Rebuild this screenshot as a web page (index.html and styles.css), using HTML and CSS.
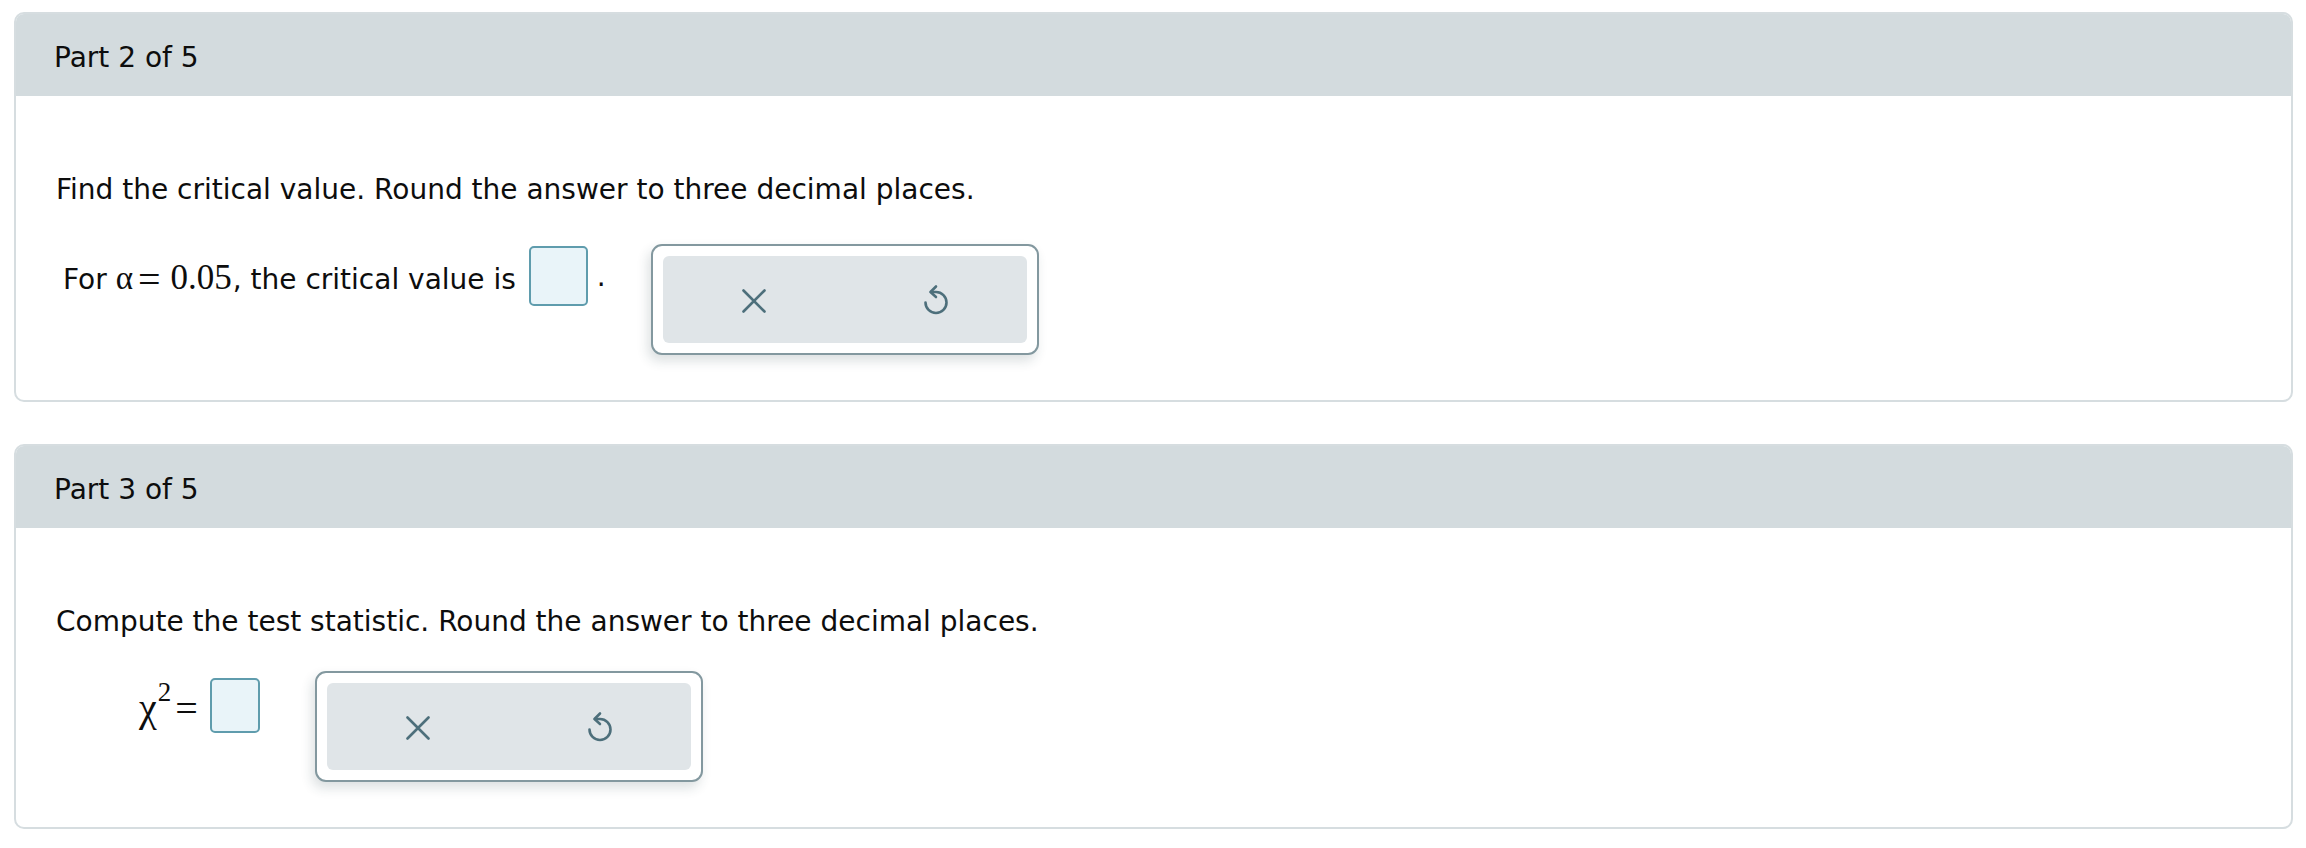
FILE: index.html
```html
<!DOCTYPE html>
<html lang="en">
<head>
<meta charset="utf-8">
<title>Parts</title>
<link rel="stylesheet" href="styles.css">
</head>
<body>
<div class="page">
  <section class="card">
    <div class="card-head">Part 2 of 5</div>
    <div class="card-body">
      <p class="question">Find the critical value. Round the answer to three decimal places.</p>
      <div class="answer-row row-one">
        <div class="prompt prompt-one">
          <span class="txt">For <span class="math alpha">α</span><span class="math eq eq-one">=</span><span class="math num">0.05</span>, the critical value is</span>
          <span class="blank blank-one"></span>
          <span class="dot">.</span>
        </div>
        <div class="tools tools-one">
          <div class="tools-inner">
            <button class="tool" type="button" aria-label="Clear">
              <svg class="ico-x" viewBox="0 0 24 24" width="24" height="24"><path d="M1.5 1.5 L22.5 22.5 M22.5 1.5 L1.5 22.5" /></svg>
            </button>
            <button class="tool" type="button" aria-label="Undo">
              <svg class="ico-undo" viewBox="0 0 28 34" width="28" height="34"><path d="M9 10 H14 A10.5 10.5 0 1 1 3.5 20.5" /><path d="M14 4.5 L8.5 10 L14 15" /></svg>
            </button>
          </div>
        </div>
      </div>
    </div>
  </section>

  <section class="card">
    <div class="card-head">Part 3 of 5</div>
    <div class="card-body">
      <p class="question">Compute the test statistic. Round the answer to three decimal places.</p>
      <div class="answer-row row-two">
        <div class="prompt prompt-two">
          <span class="chi">χ<sup class="sq">2</sup></span><span class="math eq eq-two">=</span>
          <span class="blank blank-two"></span>
        </div>
        <div class="tools tools-two">
          <div class="tools-inner">
            <button class="tool" type="button" aria-label="Clear">
              <svg class="ico-x" viewBox="0 0 24 24" width="24" height="24"><path d="M1.5 1.5 L22.5 22.5 M22.5 1.5 L1.5 22.5" /></svg>
            </button>
            <button class="tool" type="button" aria-label="Undo">
              <svg class="ico-undo" viewBox="0 0 28 34" width="28" height="34"><path d="M9 10 H14 A10.5 10.5 0 1 1 3.5 20.5" /><path d="M14 4.5 L8.5 10 L14 15" /></svg>
            </button>
          </div>
        </div>
      </div>
    </div>
  </section>
</div>
</body>
</html>
```

FILE: styles.css
```css
html, body {
  margin: 0;
  padding: 0;
  background: #ffffff;
}

body {
  font-family: "DejaVu Sans", Verdana, sans-serif;
  font-size: 28px;
  color: #0d0d0d;
}

.page {
  padding: 12px 13px 0 14px;
  display: flex;
  flex-direction: column;
  gap: 42px;
}

.card {
  border: 2px solid #d6dde0;
  border-radius: 10px;
  overflow: hidden;
  background: #ffffff;
}

.card-head {
  background: #d3dbde;
  height: 79px;
  line-height: 82px;
  padding-left: 40px;
  margin-top: -2px;
  margin-left: -2px;
  margin-right: -2px;
  padding-top: 5px;
  box-sizing: content-box;
}

.card-body {
  padding: 78px 40px 45px 40px;
}

.question {
  margin: 0;
  line-height: 32px;
}

.answer-row {
  display: flex;
  align-items: flex-start;
}

.row-one { margin-top: 38px; }
.row-two { margin-top: 33px; }

.prompt {
  display: flex;
  align-items: center;
}

.prompt-one {
  margin-left: 7px;
  margin-top: 2px;
  height: 60px;
}

.prompt-two {
  margin-left: 83px;
  margin-top: 7px;
  height: 55px;
}

.txt {
  white-space: nowrap;
  line-height: 40px;
  margin-top: 6px;
}

.math {
  font-family: "Liberation Serif", "Times New Roman", serif;
  font-size: 35px;
}

.alpha {
  font-size: 33px;
}

.eq {
  display: inline-block;
  font-size: 40px;
  margin: 0 10px 0 5px;
  line-height: 30px;
}

.eq-one {
  position: relative;
  top: 4px;
}

.num {
  margin-right: 1px;
}

.blank {
  display: inline-block;
  box-sizing: border-box;
  border: 2px solid #5f9cad;
  background: #e9f4f9;
  border-radius: 5px;
}

.blank-one {
  width: 59px;
  height: 60px;
  margin-left: 13px;
}

.blank-two {
  width: 50px;
  height: 55px;
  margin-left: 12px;
}

.dot {
  margin-left: 9px;
}

.chi {
  font-family: "Liberation Serif", "Times New Roman", serif;
  font-size: 40px;
  line-height: 40px;
  margin-top: 8px;
}

.sq {
  font-size: 27px;
  vertical-align: 0;
  position: relative;
  top: -20px;
  margin-left: 1px;
}

.eq-two {
  margin: 6px 0 0 4px;
}

.tools {
  box-sizing: border-box;
  width: 388px;
  height: 111px;
  padding: 10px;
  border: 2px solid #83989f;
  border-radius: 11px;
  background: #ffffff;
  box-shadow: -3px 6px 12px rgba(40, 60, 70, 0.16);
}

.tools-one { margin-left: 45px; }
.tools-two { margin-left: 55px; }

.tools-inner {
  display: flex;
  height: 100%;
  background: #e0e5e8;
  border-radius: 6px;
}

.tool {
  flex: 1;
  display: flex;
  align-items: center;
  justify-content: center;
  border: 0;
  background: transparent;
  padding: 0;
  margin: 0;
}

.ico-x path,
.ico-undo path {
  fill: none;
  stroke: #4d6f7b;
  stroke-width: 2.6;
  stroke-linecap: round;
  stroke-linejoin: round;
}

.ico-x {
  width: 24px;
  height: 24px;
  margin-top: 2px;
}

.ico-undo {
  width: 28px;
  height: 34px;
  margin-top: -2px;
}
```
